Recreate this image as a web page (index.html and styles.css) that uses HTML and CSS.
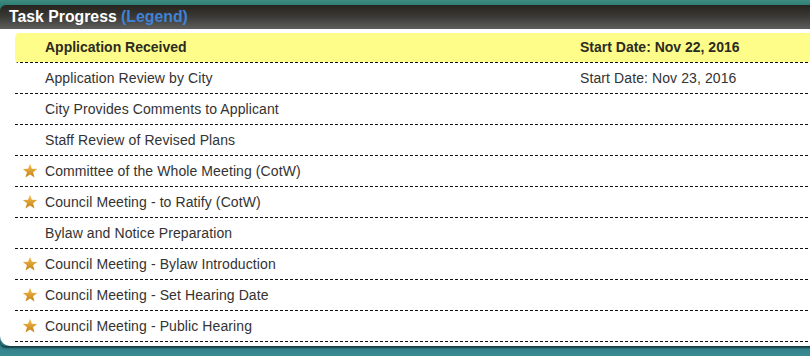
FILE: index.html
```html
<!DOCTYPE html>
<html>
<head>
<meta charset="utf-8">
<link rel="stylesheet" href="styles.css">
</head>
<body>
<div class="panel">
  <div class="panel-head"><span class="title">Task Progress</span> <span class="legend">(Legend)</span></div>
  <div class="panel-body">
    <ul class="tasks">
      <li class="task current"><span class="icon"></span><span class="name">Application Received</span><span class="date">Start Date: Nov 22, 2016</span></li>
      <li class="task"><span class="icon"></span><span class="name">Application Review by City</span><span class="date">Start Date: Nov 23, 2016</span></li>
      <li class="task"><span class="icon"></span><span class="name">City Provides Comments to Applicant</span></li>
      <li class="task"><span class="icon"></span><span class="name">Staff Review of Revised Plans</span></li>
      <li class="task"><span class="icon"><svg class="star" viewBox="0 0 20 20"><use href="#star"/></svg></span><span class="name">Committee of the Whole Meeting (CotW)</span></li>
      <li class="task"><span class="icon"><svg class="star" viewBox="0 0 20 20"><use href="#star"/></svg></span><span class="name">Council Meeting - to Ratify (CotW)</span></li>
      <li class="task"><span class="icon"></span><span class="name">Bylaw and Notice Preparation</span></li>
      <li class="task"><span class="icon"><svg class="star" viewBox="0 0 20 20"><use href="#star"/></svg></span><span class="name">Council Meeting - Bylaw Introduction</span></li>
      <li class="task"><span class="icon"><svg class="star" viewBox="0 0 20 20"><use href="#star"/></svg></span><span class="name">Council Meeting - Set Hearing Date</span></li>
      <li class="task"><span class="icon"><svg class="star" viewBox="0 0 20 20"><use href="#star"/></svg></span><span class="name">Council Meeting - Public Hearing</span></li>
    </ul>
  </div>
</div>
<svg width="0" height="0" class="defs">
  <defs>
    <linearGradient id="gold" x1="0" y1="0" x2="0" y2="1">
      <stop offset="0" stop-color="#f5c052"/>
      <stop offset="1" stop-color="#c47f14"/>
    </linearGradient>
    <symbol id="star" viewBox="0 0 20 20">
      <polygon points="10,1 12.4,7.3 19,7.5 13.8,11.6 15.6,18.2 10,14.4 4.4,18.2 6.2,11.6 1,7.5 7.6,7.3" fill="url(#gold)"/>
    </symbol>
  </defs>
</svg>
</body>
</html>
```
FILE: styles.css
```css
html, body {
  margin: 0;
  padding: 0;
}
body {
  width: 810px;
  height: 356px;
  overflow: hidden;
  font-family: "Liberation Sans", Arial, sans-serif;
  background: linear-gradient(to bottom, #3d8c7e 0px, #2f7e76 5px, #2c7c84 340px, #3b8a94 356px);
  padding-top: 5px;
  box-sizing: border-box;
}
.defs {
  position: absolute;
}
.panel {
  width: 830px;
  border-radius: 6px;
  box-shadow: 0 2px 2px rgba(0,0,0,0.55);
}
.panel-head {
  height: 24px;
  box-sizing: border-box;
  padding: 3px 0 0 9px;
  border-radius: 6px 6px 0 0;
  background: linear-gradient(to bottom, #27231d 0%, #3b3a36 50%, #5e5e5e 100%);
  font-size: 15.8px;
  font-weight: bold;
  line-height: 17px;
  white-space: nowrap;
}
.title {
  color: #ffffff;
}
.legend {
  color: #3f83d8;
}
.panel-body {
  background: #ffffff;
  border-radius: 0 0 10px 10px;
  padding: 3px 0 4px 15px;
}
.tasks {
  list-style: none;
  margin: 0;
  padding: 0;
}
.task {
  display: flex;
  align-items: center;
  height: 31px;
  padding-bottom: 1px;
  box-sizing: border-box;
  font-size: 14px;
  letter-spacing: 0.1px;
  color: #333333;
  background-image: linear-gradient(to right, #111 3px, transparent 3px);
  background-size: 5px 1px;
  background-repeat: repeat-x;
  background-position: 0 100%;
}
.task.current {
  font-weight: bold;
  color: #2b2b20;
  letter-spacing: 0;
  background-image: linear-gradient(to right, #111 3px, transparent 3px), linear-gradient(#fffd8a, #fffd8a);
  background-size: 5px 1px, 100% 29px;
  background-repeat: repeat-x, no-repeat;
  background-position: 0 100%, 0 1px;
  border-radius: 6px 0 0 4px;
}
.icon {
  width: 30px;
  flex: none;
  display: flex;
  justify-content: center;
  padding-right: 1px;
  box-sizing: border-box;
}
.star {
  width: 16px;
  height: 16px;
  display: block;
  margin-left: 1px;
}
.name {
  width: 535px;
  flex: none;
}
.date {
  white-space: nowrap;
}
```
